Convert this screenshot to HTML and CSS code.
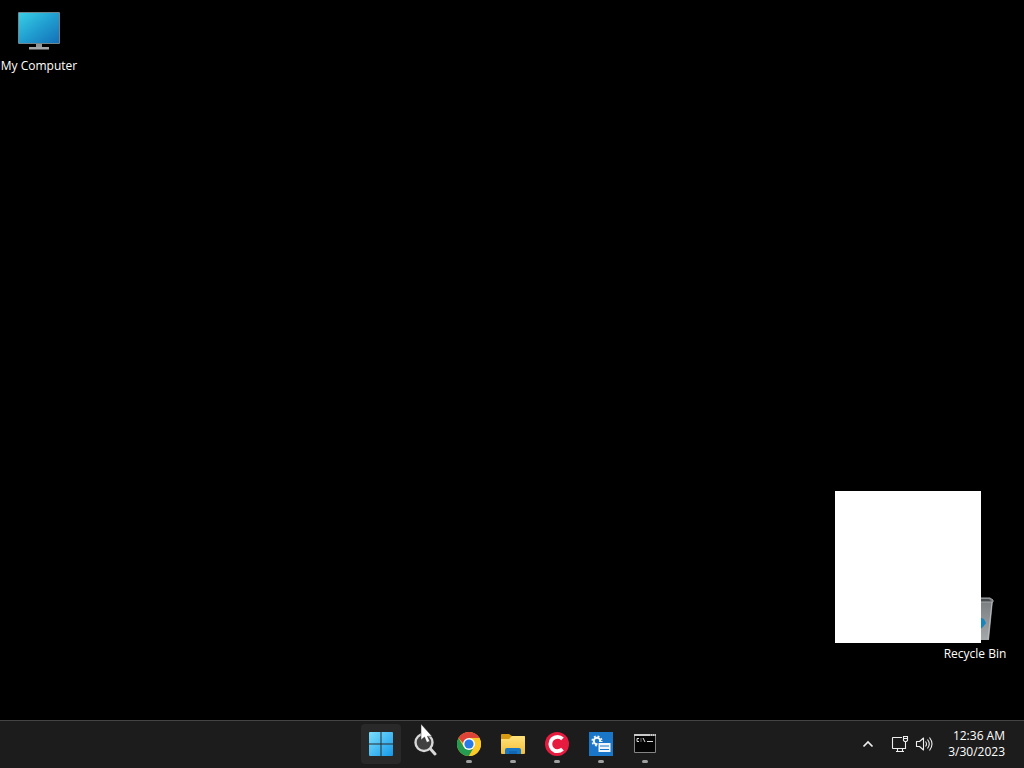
FILE: index.html
```html
<!DOCTYPE html>
<html lang="en">
<head>
<meta charset="utf-8">
<meta name="viewport" content="width=device-width, initial-scale=1">
<title>Desktop</title>
<link rel="stylesheet" href="styles.css">
</head>
<body>
<main class="desktop">
  <button class="shortcut shortcut-computer" type="button">
    <svg width="48" height="48" viewBox="0 0 48 48" aria-hidden="true">
      <defs><linearGradient id="screen" x1="0" y1="0" x2="1" y2="1"><stop offset="0" stop-color="#38cfe6"/><stop offset=".5" stop-color="#209ed0"/><stop offset="1" stop-color="#1470b8"/></linearGradient></defs>
      <rect x="3" y="4" width="42" height="32" rx="1" fill="#71858d"/>
      <rect x="4" y="5" width="40" height="30" fill="url(#screen)"/>
      <path d="M21 36h6v4h-6z" fill="#788085"/>
      <path d="M14 39h20v2.500H14z" fill="#a4a8ab"/>
      <path d="M21 36h6v3h-6z" fill="#90979b"/>
    </svg>
    <span>My Computer</span>
  </button>
  <button class="shortcut shortcut-bin" type="button">
    <svg width="48" height="48" viewBox="0 0 48 48" aria-hidden="true">
      <defs><linearGradient id="bin" x1="0" y1="0" x2="0" y2="1"><stop offset="0" stop-color="#777b7e"/><stop offset="1" stop-color="#a5a8aa"/></linearGradient></defs>
      <path d="M6 4 12 2h27l3 2-4 40H10z" fill="url(#bin)"/>
      <path d="M7 6 13 3h25l3 3z" fill="#484b4d"/>
      <path d="M6 4 12 2h27l3 2v2H6" fill="none" stroke="#a4a7a9"/>
      <path d="m41 6-4 37" stroke="#b8babb"/>
      <path d="m17 23 6-5 5 3 5 2 2 4-3 4-4 3h-9l-4-6z" fill="#1685bd"/>
      <path d="m22 25 2-3 4 6-2 3h-5z" fill="#8f9395"/>
    </svg>
    <span>Recycle Bin</span>
  </button>
  <section class="blank-window" aria-label="Blank window"></section>
</main>
<footer class="taskbar">
  <nav class="apps" aria-label="Taskbar">
    <button class="app app-active" type="button" aria-label="Start">
      <svg width="24" height="24" viewBox="0 0 24 24">
        <defs><linearGradient id="start" x1="0" y1="0" x2="1" y2="1"><stop offset="0" stop-color="#7be0fc"/><stop offset="1" stop-color="#1598ea"/></linearGradient></defs>
        <path d="M1 0h10.500v11.500H0V1q0-1 1-1m11.500 0H23q1 0 1 1v10.500H12.500zM0 12.500h11.500V24H1q-1 0-1-1zm12.500 0H24V23q0 1-1 1H12.500z" fill="url(#start)"/>
      </svg>
    </button>
    <button class="app" type="button" aria-label="Search">
      <svg width="24" height="24" viewBox="0 0 24 24">
        <circle cx="11" cy="10.500" r="8.500" fill="#414141" stroke="#d8d8d8" stroke-width="2.400"/>
        <path d="m17.500 17 4.500 5" stroke="#d8d8d8" stroke-width="3" stroke-linecap="round"/>
      </svg>
    </button>
    <button class="app app-running" type="button" aria-label="Google Chrome">
      <svg width="24" height="24" viewBox="0 0 24 24">
        <circle cx="12" cy="12" r="12" fill="#fbc928"/>
        <path d="M1.600 6A12 12 0 0 1 22.400 6H12v12z" fill="#dd4437"/>
        <path d="M1.600 6A12 12 0 0 0 12 24l5.200-9L12 17l-5.200-2z" fill="#249b50"/>
        <path d="M12 6h10.400A12 12 0 0 1 12 24l5.200-9z" fill="#fbc928"/>
        <circle cx="12" cy="12" r="6" fill="#fff"/>
        <circle cx="12" cy="12" r="4.600" fill="#287be7"/>
      </svg>
    </button>
    <button class="app app-running" type="button" aria-label="File Explorer">
      <svg width="24" height="24" viewBox="0 0 24 24">
        <defs><linearGradient id="folder" x1="0" y1="0" x2="0" y2="1"><stop offset="0" stop-color="#ffe27b"/><stop offset="1" stop-color="#f3bf38"/></linearGradient></defs>
        <path d="M0 3q0-1 1-1h7l3 2h12q1 0 1 1v7H0z" fill="#d79b13"/>
        <path d="M0 7h8l3-3h12q1 0 1 1v16q0 1-1 1H1q-1 0-1-1z" fill="url(#folder)"/>
        <path d="M4 22v-4q0-2 2-2h12q2 0 2 2v4z" fill="#1878c7"/>
        <path d="M8 19h8v3H8z" fill="#1267b3"/>
      </svg>
    </button>
    <button class="app app-running" type="button" aria-label="C app">
      <svg width="24" height="24" viewBox="0 0 24 24">
        <circle cx="12" cy="12" r="12" fill="#e71b3f"/>
        <path d="M17.500 6.800A7.200 7.200 0 1 0 17.500 17.200" fill="none" stroke="#fff" stroke-width="3.800"/>
      </svg>
    </button>
    <button class="app app-running" type="button" aria-label="System configuration">
      <svg width="24" height="24" viewBox="0 0 24 24">
        <path d="M0 0h24v24H0z" fill="#1976c9"/>
        <circle cx="8" cy="9" r="3.200" fill="none" stroke="#f2f7fb" stroke-width="2"/>
        <circle cx="8" cy="9" r="4.800" fill="none" stroke="#f2f7fb" stroke-width="1.600" stroke-dasharray="1.900 1.870"/>
        <path d="M9 10.500h13v10H9z" fill="#f2f7fb" stroke="#1976c9"/>
        <path d="M11 14h9m-9 3.500h9" stroke="#1976c9" stroke-width="1"/>
      </svg>
    </button>
    <button class="app app-running" type="button" aria-label="Command Prompt">
      <svg width="24" height="24" viewBox="0 0 24 24">
        <path d="M1.500 2.500h21v18h-21z" fill="#050505" stroke="#858585"/>
        <path d="M1 2h22v2H1z" fill="#c9c9c9"/>
        <path d="M17 3h1m1 0h1m1 0h1" stroke="#555"/>
        <path d="M6 6.500H4v3h2M8 6.500v1m0 1v1M10 6l2 4m2-.5h6" fill="none" stroke="#ddd"/>
      </svg>
    </button>
  </nav>
  <div class="tray">
    <button class="tray-button" type="button" aria-label="Show hidden icons">
      <svg width="16" height="16" viewBox="0 0 16 16"><path d="m3.500 10.500 4.500-4.500 4.500 4.500" fill="none" stroke="#eee" stroke-width="1.700"/></svg>
    </button>
    <button class="tray-button tray-status" type="button" aria-label="Network and volume">
      <svg width="18" height="18" viewBox="0 0 18 18"><path d="M11 2.500H2q-.5 0-.5.5v10q0 .5.500.500h12.500V7M5 16.500h8M6.500 14v2m5-2v2M12.500 1.500h4v4l-1 1h-2l-1-1zM13 3.500h3" fill="none" stroke="#eee" stroke-width="1.100"/></svg>
      <svg width="18" height="18" viewBox="0 0 18 18"><path d="M1.500 6.500h3L8.500 3v12l-4-3.500h-3zM10.500 6.500q2 2.500 0 5M12.500 4.500q3.500 4.500 0 9M14.500 2.500q5 6.500 0 13" fill="none" stroke="#eee" stroke-width="1.100" stroke-linejoin="round"/></svg>
    </button>
    <button class="clock" type="button"><time datetime="00:36">12:36 AM</time><time datetime="2023-03-30">3/30/2023</time></button>
  </div>
</footer>
<svg class="cursor" width="13" height="19" viewBox="0 0 13 19" aria-hidden="true"><path d="M1 0v16l3.500-3 2.300 5.500 3-1.200-2.400-5H12z" fill="#fff" stroke="#292929" stroke-width=".5"/></svg>
</body>
</html>
```

FILE: styles.css
```css
* { box-sizing: border-box; }
body {
  margin: 0;
  min-height: 100vh;
  display: flex;
  flex-direction: column;
  overflow: hidden;
  background: #000;
  color: #fff;
  font: 12px/16px "Open Sans", "Noto Sans", sans-serif;
}
button {
  padding: 0;
  border: 0;
  background: none;
  color: inherit;
  font: inherit;
}
svg { display: block; flex: none; }
.desktop { flex: 1; position: relative; }
.shortcut {
  position: absolute;
  width: 78px;
  display: flex;
  flex-direction: column;
  align-items: center;
  gap: 2px;
  white-space: nowrap;
}
.shortcut-computer { left: 0; top: 8px; }
.shortcut-bin { right: 10px; bottom: 58px; }
.blank-window {
  position: absolute;
  right: 43px;
  bottom: 77px;
  width: 146px;
  height: 152px;
  background: #fff;
}
.taskbar {
  height: 48px;
  display: grid;
  grid-template-columns: 1fr auto 1fr;
  align-items: center;
  padding-bottom: 2px;
  border-top: 1px solid #444;
  background: #1c1c1c;
}
.apps { grid-column: 2; display: flex; gap: 4px; padding-left: 1px; }
.app {
  position: relative;
  width: 40px;
  height: 40px;
  display: grid;
  place-items: center;
  border-radius: 4px;
}
.app-active { background: #292929; }
.app-running::after {
  content: "";
  position: absolute;
  bottom: 1px;
  left: 17px;
  width: 6px;
  height: 3px;
  border-radius: 2px;
  background: #a0a0a0;
}
.tray {
  display: flex;
  justify-content: flex-end;
  align-items: center;
  gap: 15px;
  padding-right: 19px;
}
.tray-status { display: flex; gap: 6px; }
.clock {
  display: flex;
  flex-direction: column;
  align-items: flex-end;
  text-align: right;
}
.cursor { position: absolute; left: 420px; top: 724px; }
```
